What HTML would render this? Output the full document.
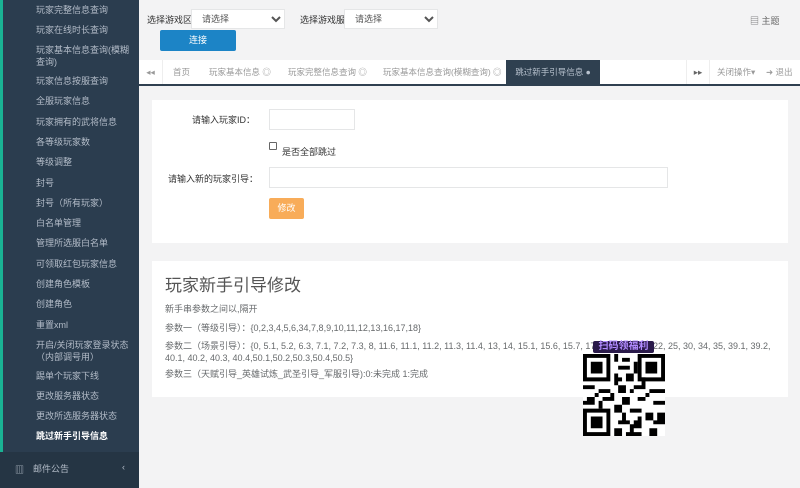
<!DOCTYPE html>
<html><head><meta charset="utf-8"><style>
*{margin:0;padding:0;box-sizing:border-box}
body{width:800px;height:488px;overflow:hidden;background:#f3f3f4;font-family:"Liberation Sans","Noto Sans CJK SC",sans-serif;font-size:9px;color:#676a6c;position:relative}
.sb{position:absolute;left:0;top:0;width:139px;height:488px;background:#2b3d4f}
.sb .g{position:absolute;left:0;top:0;width:3px;height:452px;background:#1ab394}
.sb div.i{position:absolute;left:36px;color:#b3bcc8;font-size:9px;line-height:12px;width:100px}
.sb .mail{position:absolute;left:0;top:452px;width:139px;height:36px;background:#253544;color:#b3bcc8}
.abs{position:absolute}
select{position:absolute;height:20px;background:#fff;border:1px solid #e5e6e7;font-size:9px;color:#555;padding-left:6px}
.tabs{position:absolute;left:139px;top:60px;width:661px;height:26px;background:#fff;border-bottom:2px solid #2f4050}
.tab{position:absolute;top:0;height:24px;line-height:24px;color:#999;font-size:8.5px;white-space:nowrap}
.panel{position:absolute;background:#fff;left:152px;width:636px}
input.t{position:absolute;height:21px;border:1px solid #e5e6e7;background:#fff}
</style></head><body>
<div class="sb"><div class="g"></div>
<div class="i" style="top:4px">玩家完整信息查询</div>
<div class="i" style="top:24px">玩家在线时长查询</div>
<div class="i" style="top:44px">玩家基本信息查询(模糊查询)</div>
<div class="i" style="top:75px">玩家信息按服查询</div>
<div class="i" style="top:95px">全服玩家信息</div>
<div class="i" style="top:116px">玩家拥有的武将信息</div>
<div class="i" style="top:136px">各等级玩家数</div>
<div class="i" style="top:156px">等级调整</div>
<div class="i" style="top:177px">封号</div>
<div class="i" style="top:197px">封号（所有玩家）</div>
<div class="i" style="top:217px">白名单管理</div>
<div class="i" style="top:237px">管理所选服白名单</div>
<div class="i" style="top:258px">可领取红包玩家信息</div>
<div class="i" style="top:278px">创建角色模板</div>
<div class="i" style="top:298px">创建角色</div>
<div class="i" style="top:319px">重置xml</div>
<div class="i" style="top:339px">开启/关闭玩家登录状态（内部调号用）</div>
<div class="i" style="top:370px">踢单个玩家下线</div>
<div class="i" style="top:390px">更改服务器状态</div>
<div class="i" style="top:410px">更改所选服务器状态</div>
<div class="i" style="top:430px;color:#fff;font-weight:bold">跳过新手引导信息</div>
<div class="mail"><span class="abs" style="left:15px;top:11px">▥</span><span class="abs" style="left:33px;top:10px">邮件公告</span><span class="abs" style="left:122px;top:10px">‹</span></div>
</div>

<div class="abs" style="left:147px;top:13px;color:#333">选择游戏区</div>
<select style="left:191px;top:9px;width:94px"><option>请选择</option></select>
<div class="abs" style="left:300px;top:13px;color:#333">选择游戏服</div>
<select style="left:344px;top:9px;width:94px"><option>请选择</option></select>
<div class="abs" style="left:160px;top:30px;width:76px;height:21px;background:#1c84c6;border-radius:2px;color:#fff;text-align:center;line-height:21px">连接</div>
<div class="abs" style="left:750px;top:14px;color:#666">▤ 主题</div>

<div class="tabs">
<div class="tab" style="left:0;width:24px;text-align:center;border-right:1px solid #eee">◂◂</div>
<div class="tab" style="left:34px">首页</div>
<div class="tab" style="left:70px">玩家基本信息 ◎</div>
<div class="tab" style="left:149px">玩家完整信息查询 ◎</div>
<div class="tab" style="left:244px">玩家基本信息查询(模糊查询) ◎</div>
<div class="tab" style="left:367px;width:94px;background:#2f4050;color:#b8c2ce;text-align:center">跳过新手引导信息 ●</div>
<div class="tab" style="left:547px;width:24px;text-align:center;border-left:1px solid #eee;border-right:1px solid #eee;color:#666">▸▸</div>
<div class="tab" style="left:578px">关闭操作▾</div>
<div class="tab" style="left:627px">➜ 退出</div>
</div>

<div class="panel" style="top:100px;height:143px">
<div class="abs" style="left:40px;top:13px;color:#333">请输入玩家ID：</div>
<input class="t" style="left:117px;top:9px;width:86px">
<div class="abs" style="left:117px;top:42px;width:8px;height:8px;border:1px solid #666;border-radius:1px"></div>
<div class="abs" style="left:130px;top:45px;color:#333">是否全部跳过</div>
<div class="abs" style="left:16px;top:72px;color:#333">请输入新的玩家引导：</div>
<input class="t" style="left:117px;top:67px;width:399px">
<div class="abs" style="left:117px;top:98px;width:35px;height:21px;background:#f8ac59;border-radius:2px;color:#fff;text-align:center;line-height:21px">修改</div>
</div>

<div class="panel" style="top:261px;height:136px">
<div class="abs" style="left:13px;top:10px;font-size:17px;color:#555">玩家新手引导修改</div>
<div class="abs" style="left:13px;top:41px">新手串参数之间以,隔开</div>
<div class="abs" style="left:13px;top:60px">参数一（等级引导）：{0,2,3,4,5,6,34,7,8,9,10,11,12,13,16,17,18}</div>
<div class="abs" style="left:13px;top:79px;width:620px;line-height:12px">参数二（场景引导）：{0, 5.1, 5.2, 6.3, 7.1, 7.2, 7.3, 8, 11.6, 11.1, 11.2, 11.3, 11.4, 13, 14, 15.1, 15.6, 15.7, 17.1, 17.2, 17.3, 22, 25, 30, 34, 35, 39.1, 39.2, 40.1, 40.2, 40.3, 40.4,50.1,50.2,50.3,50.4,50.5}</div>
<div class="abs" style="left:13px;top:106px">参数三（天赋引导_英雄试炼_武圣引导_军服引导):0:未完成  1:完成</div>
</div>

<div class="abs" style="left:593px;top:341px;width:61px;height:12px;background:#2a1a4a;color:#b28cff;font-size:10px;font-weight:bold;line-height:12px;text-align:center;border-radius:2px">扫码领福利</div>
<svg class="abs" style="left:583px;top:354px" width="82" height="82" viewBox="0 0 21 21">
<rect width="21" height="21" fill="#fff"/>
<g fill="#000"><path d="M0 0h7v7H0zM14 0h7v7h-7zM0 14h7v7H0z"/></g>
<g fill="#fff"><path d="M1 1h5v5H1zM15 1h5v5h-5zM1 15h5v5H1z"/></g>
<g fill="#000"><path d="M2 2h3v3H2zM16 2h3v3h-3zM2 16h3v3H2z"/>
<path d="M8 0h1v2H8zM10 1h2v1h-2zM9 3h3v1H9zM8 5h1v3H8zM11 5h2v2h-2zM0 8h3v1H0zM4 9h3v1H4zM9 8h2v2H9zM13 8h3v1h-3zM17 9h4v1h-4zM1 11h2v2H1zM5 11h3v1H5zM10 11h2v2h-2zM14 11h2v1h-2zM18 12h3v1h-3zM8 13h2v2H8zM12 14h3v1h-3zM16 15h2v2h-2zM19 15h2v3h-2zM9 17h3v1H9zM13 17h2v2h-2zM8 19h2v2H8zM11 20h4v1h-4zM17 19h2v2h-2zM3 10h1v1H3zM15 6h1v2h-1zM7 10h1v2H7zM12 9h1v1h-1zM16 10h1v1h-1zM0 12h1v1H0zM4 12h1v2H4zM10 15h1v2h-1zM14 16h1v1h-1zM18 17h1v1h-1zM12 18h1v2h-1zM9 6h1v1H9zM13 2h1v3h-1z"/></g>
</svg>
</body></html>
